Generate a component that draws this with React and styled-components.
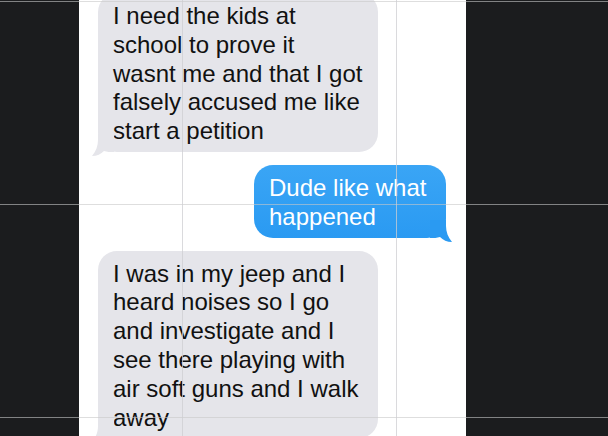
import React from "react"
import styled, { createGlobalStyle } from "styled-components"

const GlobalStyle = createGlobalStyle`
  html, body {
    margin: 0;
    padding: 0;
    background: #1b1c1e;
  }
  body {
    font-family: "Liberation Sans", Arial, sans-serif;
  }
`

const messages = [
  {
    from: "them",
    width: 280,
    lines: [
      "I need the kids at",
      "school to prove it",
      "wasnt me and that I got",
      "falsely accused me like",
      "start a petition",
    ],
  },
  {
    from: "me",
    width: 192,
    lines: ["Dude like what", "happened"],
  },
  {
    from: "them",
    width: 280,
    lines: [
      "I was in my jeep and I",
      "heard noises so I go",
      "and investigate and I",
      "see there playing with",
      "air soft guns and I walk",
      "away",
    ],
  },
]

function Tail({ from }) {
  return (
    <TailShape $from={from} width="22" height="22" viewBox="0 0 22 22">
      <path
        d="M0 0 L16 0 L16 6 C16 12 18 17 22 22 C17 22 13 20 10 17 C7 18 4 18 0 18 Z"
        fill={from === "me" ? "#2a9af2" : "#e5e5ea"}
      />
    </TailShape>
  )
}

export default function App() {
  return (
    <>
      <GlobalStyle />
      <Page>
        <Side $width="79px" />
        <Column>
          <Thread>
            {messages.map((m, i) => (
              <Bubble key={i} $from={m.from} $width={m.width}>
                {m.lines.map((l, j) => (
                  <Line key={j}>{l}</Line>
                ))}
                <Tail from={m.from} />
              </Bubble>
            ))}
          </Thread>
        </Column>
        <Side />
        <HLine $top={1} />
        <HLine $top={204} />
        <HLine $top={417} />
        <VLine $left={182} />
        <VLine $left={396} />
      </Page>
    </>
  )
}

const Page = styled.div`
  position: relative;
  display: flex;
  width: 608px;
  height: 436px;
  overflow: hidden;
`
const Side = styled.div`
  flex: ${(p) => (p.$width ? `0 0 ${p.$width}` : "1")};
  background: #1b1c1e;
`
const Column = styled.div`
  flex: 0 0 387px;
  background: #ffffff;
  overflow: hidden;
`
const Thread = styled.div`
  display: flex;
  flex-direction: column;
  gap: 13px;
  margin-top: -7px;
  padding: 0 20px 0 19px;
`
const Bubble = styled.div`
  position: relative;
  box-sizing: border-box;
  width: ${(p) => p.$width}px;
  align-self: ${(p) => (p.$from === "me" ? "flex-end" : "flex-start")};
  padding: 9px 14px 6px 15px;
  border-radius: 19px;
  font-size: 24px;
  line-height: 28.8px;
  color: ${(p) => (p.$from === "me" ? "#ffffff" : "#111111")};
  background: ${(p) =>
    p.$from === "me"
      ? "linear-gradient(180deg, #3aa5f5 0%, #2a9af2 100%)"
      : "#e5e5ea"};
  & + & {
    margin-top: ${(p) => (p.$from === "them" ? "1px" : "0")};
  }
`
const Line = styled.div`
  white-space: nowrap;
`
const TailShape = styled.svg`
  position: absolute;
  bottom: -4px;
  ${(p) => (p.$from === "me" ? "right: -6px;" : "left: -6px; transform: scaleX(-1);")}
`
const HLine = styled.div`
  position: absolute;
  left: 0;
  right: 0;
  top: ${(p) => p.$top}px;
  height: 1px;
  background: rgba(200, 200, 200, 0.6);
  pointer-events: none;
`
const VLine = styled.div`
  position: absolute;
  top: 0;
  bottom: 0;
  left: ${(p) => p.$left}px;
  width: 1px;
  background: rgba(205, 205, 210, 0.75);
  pointer-events: none;
`
